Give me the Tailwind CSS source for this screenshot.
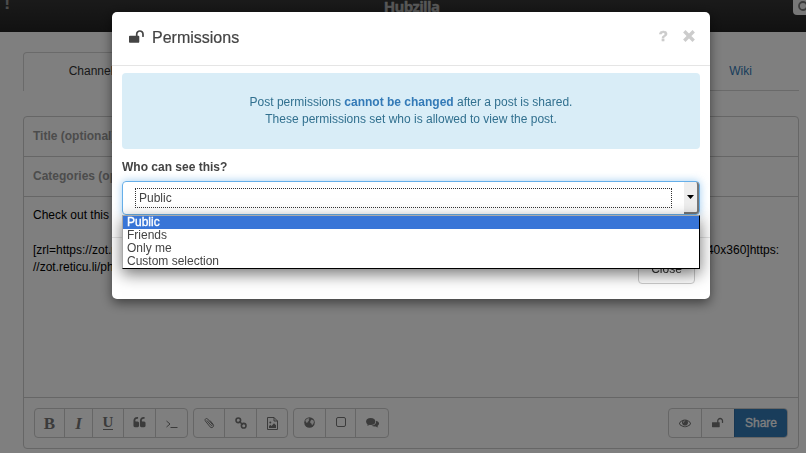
<!DOCTYPE html>
<html lang="en">
<head>
<meta charset="utf-8">
<title>Hubzilla</title>
<script src="https://cdn.jsdelivr.net/npm/@tailwindcss/browser@4"></script>
</head>
<body class="h-[453px] w-[806px] overflow-hidden bg-white font-['Liberation_Sans',Arial,sans-serif] text-[12px] leading-[17px] text-[#333]">
<svg class="hidden">
  <symbol id="unlock" viewBox="0 0 1792 1792"><path d="M1664 576v256q0 26-19 45t-45 19h-64q-26 0-45-19t-19-45v-256q0-106-75-181t-181-75-181 75-75 181v192h96q40 0 68 28t28 68v576q0 40-28 68t-68 28h-960q-40 0-68-28t-28-68v-576q0-40 28-68t68-28h672v-192q0-185 131.500-316.500t316.500-131.500 316.500 131.500 131.500 316.500z"/></symbol>
</svg>
<div class="h-[453px] overflow-hidden">
  <header class="flex h-8 justify-between bg-linear-to-b from-[#353535] to-[#232323]">
    <span class="-mt-[10px] ml-[4px] w-[50px] text-[19px] leading-[26px] font-bold text-[#999]">!</span>
    <span class="-mt-[5px] ml-[17px] h-5 font-['Open_Sans',sans-serif] text-[15px] leading-[22px] font-bold tracking-[-0.65px] text-[#b0b0b0] [-webkit-text-stroke:0.4px_#b0b0b0]">Hubzilla</span>
    <div class="-mt-[5px] flex h-5 w-[54px] justify-end">
      <div class="h-5 w-[13px] rounded-bl bg-[#eee] pt-[6px] pl-[5px]"><svg class="h-[11px] w-[11px]" viewBox="0 0 11 11" fill="none" stroke="#777" stroke-width="1.8"><circle cx="5" cy="5" r="4"/><path d="M8 8l3 3"/></svg></div>
    </div>
  </header>
  <main class="mt-5 ml-[23px] w-[776px]">
    <nav class="flex h-[39px] text-center">
      <div class="w-[134px] rounded-t border border-b-0 border-[#d4d4d4] pt-[10px] pl-[2px] text-[#333]">Channel</div>
      <div class="flex flex-1 justify-end border-b border-[#d4d4d4] pt-[11px]"><div class="w-[117px] text-[#337ab7]">Wiki</div></div>
    </nav>
    <section class="mt-[25px] flex h-[333px] flex-col rounded border border-[#ccc]">
      <div class="h-10 border-b border-[#ccc] pt-[11px] pl-[9px] font-bold text-[#999]">Title (optional)</div>
      <div class="h-10 border-b border-[#ccc] pt-[11px] pl-[9px] font-bold text-[#999]">Categories (optional)</div>
      <div class="flex-1 px-[9px] pt-[10px] text-black">
        <p>Check out this photo</p>
        <p class="h-[18px]">&nbsp;</p>
        <div class="flex justify-between pr-[10px] whitespace-nowrap"><span>[zrl=https://zot.reticu.li/photos/</span><span>zmg=640x360]https:</span></div>
        <p>//zot.reticu.li/photo/</p>
      </div>
      <footer class="flex h-[51px] border-t border-[#ccc] px-[10px] pt-[10px] font-['Liberation_Serif',serif] text-[17px] font-bold text-[#777]">
        <div class="grid h-[30px] w-[154px] grid-cols-[30px_28px_31px_32px_31px] place-items-center divide-x divide-[#ccc] rounded border border-[#ccc] *:flex *:size-full *:items-center *:justify-center">
          <div>B</div><div class="italic">I</div><div class="text-[15px]"><span class="border-b border-[#777] leading-[13px]">U</span></div>
          <div><svg class="mb-px size-[13px]" viewBox="0 0 1792 1792" fill="#777"><path id="q" d="M832 960v384q0 80-56 136t-136 56h-384q-80 0-136-56t-56-136v-704q0-104 40.500-198.500t109.500-163.500 163.500-109.500 198.500-40.500h64q26 0 45 19t19 45v128q0 26-19 45t-45 19h-64q-106 0-181 75t-75 181v32q0 40 28 68t68 28h224q80 0 136 56t56 136z"/><use href="#q" x="896"/></svg></div>
          <div><svg class="mt-px h-[10px] w-[13px]" viewBox="0 0 13 10" fill="none" stroke="#777" stroke-width="1"><path d="M1.500 2l3.500 3-3.500 3M5.500 8.500h7"/></svg></div>
        </div>
        <div class="ml-[5px] grid h-[30px] w-[95px] grid-cols-[31px_32px_30px] divide-x divide-[#ccc] rounded border border-[#ccc] *:flex *:size-full *:items-center *:justify-center">
          <div><svg class="mb-px size-[12px]" viewBox="0 0 12 12" fill="none" stroke="#777" stroke-width="1"><path d="M3.800 3.400l4.200 4.900c.8.8 1.900-.2 1.200-1.100L4.700 2C3.300.600 1.200 2.400 2.400 4l4.700 5.900c1.700 2 4.700-.6 3-2.600L7 3.500"/></svg></div>
          <div><svg class="mb-px size-[12px]" viewBox="0 0 12 12" fill="none" stroke="#777" stroke-width="1.600"><circle cx="3.300" cy="3.300" r="2.300"/><circle cx="8.700" cy="8.700" r="2.300"/><path d="M4.200 4.200L7.800 7.800"/></svg></div>
          <div><svg class="h-[13px] w-[11px]" viewBox="0 0 11 13" fill="none" stroke="#777"><path d="M.500.500H7L10.500 4v8.500H.500zM7 .500V4h3.500"/><path d="M2 11V9l1.300-1.300L4.500 9 7 6.300l2 2V11z" fill="#777" stroke="none"/><circle cx="3.300" cy="5.500" r="1" fill="#777" stroke="none"/></svg></div>
        </div>
        <div class="ml-[5px] grid h-[30px] w-[96px] grid-cols-[32px_30px_32px] divide-x divide-[#ccc] rounded border border-[#ccc] *:flex *:size-full *:items-center *:justify-center">
          <div><svg class="mb-px size-[11px]" viewBox="0 0 11 11"><circle cx="5.500" cy="5.500" r="5.300" fill="#777"/><path d="M1.300 3.500L3 1.800l1.500-.6 1 .6-.8 1 .3 1.100-1.200.6.300 1-1.100-.3-.6.700zM6.300 4.300l1.200-1.700 1.800.7.700 1.700-.8 2-1.200 1.300-.6-1.900-1.100-.5z" fill="#eee"/></svg></div>
          <div><svg class="mb-[3px] size-[10px]" viewBox="0 0 10 10" fill="none" stroke="#777" stroke-width="1"><rect x=".5" y=".5" width="9" height="9" rx="1.500"/></svg></div>
          <div><svg class="h-[10px] w-[13px]" viewBox="0 0 13 10" fill="#777"><ellipse cx="4.700" cy="3.600" rx="4.600" ry="3.500"/><path d="M1.800 6c0 .8-.6 1.300-.9 1.600C2.500 7.700 3.500 7 4 6.500zM10 2.800C14 4 13.600 6.600 11.500 7.900c0 .5.300.9.900 1.400-1 0-1.900-.4-2.500-.9C8 8.600 6.700 8.400 5.500 7.700 8.500 7.500 10.600 5.500 10 2.800z"/></svg></div>
        </div>
        <div class="ml-auto flex h-[30px] w-[120px] overflow-hidden rounded border border-[#ccc] font-['Liberation_Sans',Arial,sans-serif] text-[12px]">
          <div class="flex w-[33px] items-center justify-center border-r border-[#ccc]"><svg class="size-[12px]" viewBox="0 0 1792 1792" fill="#777"><path d="M1664 960q-152-236-381-353 61 104 61 225 0 185-131.500 316.500t-316.500 131.500-316.500-131.500-131.500-316.500q0-121 61-225-229 117-381 353 133 205 333.500 326.500t434.500 121.500 434.500-121.500 333.500-326.500zm-720-384q0-20-14-34t-34-14q-125 0-214.500 89.500t-89.500 214.500q0 20 14 34t34 14 34-14 14-34q0-86 61-147t147-61q20 0 34-14t14-34zm848 384q0 34-20 69-140 230-376.500 368.500t-499.500 138.500-499.500-139-376.500-368q-20-35-20-69t20-69q140-229 376.500-368t499.500-139 499.500 139 376.500 368q20 35 20 69z"/></svg></div>
          <div class="flex w-[32px] items-center justify-center"><svg class="size-[12px]" fill="#777"><use href="#unlock"/></svg></div>
          <div class="-my-px -mr-px flex flex-1 items-center justify-center border border-[#2e6da4] bg-[#337ab7] font-normal text-white [-webkit-text-stroke:0.3px_white]">Share</div>
        </div>
      </footer>
    </section>
  </main>
</div>

<div class="fixed inset-0 bg-black/50"></div>

<div class="fixed top-3 left-[112px] flex h-[287px] w-[598px] flex-col rounded-[5px] bg-white shadow-[0_4px_12px_rgba(0,0,0,0.5)]">
  <header class="flex h-[54px] shrink-0 border-b border-[#e5e5e5] pr-[15px] pl-[17px]">
    <svg class="mt-[17px] size-4" fill="#444"><use href="#unlock"/></svg>
    <h4 class="mt-[14px] ml-[7px] text-[16px] leading-[24px] text-[#444] [-webkit-text-stroke:0.2px_#444]">Permissions</h4>
    <span class="mt-[14px] ml-auto text-[15px] leading-[19px] font-bold text-[#ccc] [-webkit-text-stroke:0.5px_#ccc]">?</span>
    <svg class="mt-[18px] ml-[15px] size-[12px]" viewBox="0 0 12 12" stroke="#ccc" stroke-width="3.400"><path d="M1.300 1.300l9.400 9.400M10.700 1.300l-9.400 9.400"/></svg>
  </header>
  <div class="h-[171px] shrink-0 px-[10px] pt-[7px]">
    <div class="h-[76px] rounded bg-[#d9edf7] pt-[21px] text-center text-[#31708f]">Post permissions <b class="text-[#337ab7]">cannot be changed</b> after a post is shared.<br>These permissions set who is allowed to view the post.</div>
    <label class="mt-[10px] block h-[22px] font-bold text-[#444]">Who can see this?</label>
    <div class="relative flex h-[34px] rounded border border-[#66afe9] shadow-[0_0_8px_rgba(102,175,233,0.6)]">
      <div class="mt-[6px] ml-[12px] h-[20px] w-[537px] border border-dotted border-[#333] pl-[3px] leading-[18px] text-[#444]">Public</div>
      <div class="ml-auto flex w-[15px] items-center justify-center rounded-r-[3px] border-r-2 border-b-2 border-[#777] bg-[#eee]"><svg class="h-[4px] w-[7px]" viewBox="0 0 7 4"><path d="M0 0h7L3.500 4z"/></svg></div>
      <div class="absolute top-[33px] -left-px z-10 w-[578px] border border-t-[#a9a9a9] border-r-black border-b-black border-l-[#a9a9a9] bg-white leading-[13px] text-[#444] shadow-[0_5px_15px_rgba(0,0,0,0.55)] *:h-[13px] *:pl-[4px]">
        <div class="bg-[#3875d7] text-white [-webkit-text-stroke:0.35px_white]">Public</div>
        <div>Friends</div><div>Only me</div><div>Custom selection</div>
      </div>
    </div>
  </div>
  <footer class="flex flex-1 justify-end border-t border-[#e5e5e5] pt-[15px] pr-[15px]">
    <button class="h-[31px] w-[57px] rounded border border-[#ccc] leading-[28px]">Close</button>
  </footer>
</div>
</body>
</html>
